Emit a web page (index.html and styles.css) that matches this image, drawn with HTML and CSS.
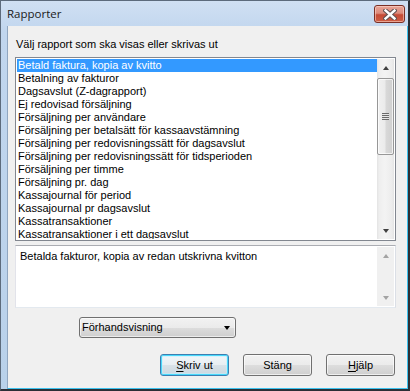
FILE: index.html
```html
<!DOCTYPE html>
<html lang="sv">
<head>
<meta charset="utf-8">
<title>Rapporter</title>
<link rel="stylesheet" href="styles.css">
</head>
<body>
<div class="window">
  <div class="titlebar">
    <span class="title">Rapporter</span>
    <button class="close" aria-label="Stäng">
      <svg width="14" height="11" viewBox="0 0 14 11"><path d="M2.5 1.5 L11.5 9.5 M11.5 1.5 L2.5 9.5" stroke="#5e5050" stroke-width="4.4" stroke-linecap="square"/><path d="M2.5 1.5 L11.5 9.5 M11.5 1.5 L2.5 9.5" stroke="#ffffff" stroke-width="2.4" stroke-linecap="square"/></svg>
    </button>
  </div>
  <div class="client">
    <div class="label">Välj rapport som ska visas eller skrivas ut</div>
    <div class="listbox">
      <ul class="items">
        <li class="selected">Betald faktura, kopia av kvitto</li>
        <li>Betalning av fakturor</li>
        <li>Dagsavslut (Z-dagrapport)</li>
        <li>Ej redovisad försäljning</li>
        <li>Försäljning per användare</li>
        <li>Försäljning per betalsätt för kassaavstämning</li>
        <li>Försäljning per redovisningssätt för dagsavslut</li>
        <li>Försäljning per redovisningssätt för tidsperioden</li>
        <li>Försäljning per timme</li>
        <li>Försäljning pr. dag</li>
        <li>Kassajournal för period</li>
        <li>Kassajournal pr dagsavslut</li>
        <li>Kassatransaktioner</li>
        <li>Kassatransaktioner i ett dagsavslut</li>
      </ul>
      <div class="vscroll">
        <div class="arrow up"><span class="tri-up"></span></div>
        <div class="track">
          <div class="thumb"><span class="grip"></span></div>
        </div>
        <div class="arrow down"><span class="tri-down"></span></div>
      </div>
    </div>
    <div class="textbox">
      <div class="desc">Betalda fakturor, kopia av redan utskrivna kvitton</div>
      <div class="vscroll disabled">
        <div class="arrow up"><span class="tri-up"></span></div>
        <div class="track"></div>
        <div class="arrow down"><span class="tri-down"></span></div>
      </div>
    </div>
    <div class="combo-row">
      <div class="combo">
        <span class="combo-text">Förhandsvisning</span>
        <span class="combo-arrow"></span>
      </div>
    </div>
    <div class="buttons">
      <button class="btn default"><u>S</u>kriv ut</button>
      <button class="btn">Stäng</button>
      <button class="btn"><u>H</u>jälp</button>
    </div>
  </div>
</div>
</body>
</html>
```

FILE: styles.css
```css
html, body {
  margin: 0;
  padding: 0;
  background: #ffffff;
}

body {
  font-family: "Liberation Sans", "DejaVu Sans", sans-serif;
  font-size: 11px;
  color: #000000;
}

.window {
  width: 410px;
  height: 391px;
  box-sizing: border-box;
  border-top: 1px solid #5d6b7c;
  border-left: 1px solid #5d6b7c;
  border-right: 2px solid #2b2f36;
  border-bottom: 2px solid #2b2f36;
  background: linear-gradient(to bottom, #d0e0f3 0px, #c1d6ee 30px, #b9d1ea 100%);
  padding: 0 0 0 6px;
  display: flex;
  flex-direction: column;
}

.titlebar {
  height: 25px;
  display: flex;
  align-items: flex-start;
  justify-content: space-between;
  flex: none;
}

.title {
  font-family: "Open Sans", "Noto Sans", sans-serif;
  font-size: 11.5px;
  color: #1a1a1a;
  margin-top: 5px;
}

.close {
  width: 31px;
  height: 18px;
  margin-top: 4px;
  margin-right: 3px;
  padding: 0;
  border: 1px solid #7a2f25;
  border-radius: 3px;
  background: linear-gradient(to bottom, #e8a597 0%, #dc8b7c 45%, #c54a35 55%, #cd5e45 100%);
  box-shadow: inset 0 0 0 1px rgba(255, 220, 210, 0.55);
  display: flex;
  align-items: center;
  justify-content: center;
}

.client {
  flex: 1;
  background: #f0f0f0;
  border-left: 1px solid #90a6c0;
  border-right: 1px solid #3cc2ee;
  border-bottom: 1px solid #3cc2ee;
  padding: 12px 11px 0 7px;
  display: flex;
  flex-direction: column;
}

.label {
  height: 13px;
  line-height: 13px;
  padding-left: 1px;
  margin-bottom: 6px;
}

.listbox {
  width: 381px;
  height: 184px;
  box-sizing: border-box;
  border: 1px solid #828790;
  background: #ffffff;
  padding: 1px;
  display: flex;
  overflow: hidden;
}

.items {
  list-style: none;
  margin: 0;
  padding: 0;
  flex: 1;
  overflow: hidden;
}

.items li {
  height: 13px;
  line-height: 13px;
  padding-left: 1px;
  white-space: nowrap;
}

.items li.selected {
  background: #3399ff;
  color: #ffffff;
}

.vscroll {
  width: 17px;
  flex: none;
  display: flex;
  flex-direction: column;
  background: linear-gradient(to right, #e3e3e3 0px, #eeeeee 2px, #f3f3f3 8px, #ececec 15px, #e3e3e3 17px);
}

.arrow {
  height: 17px;
  flex: none;
  display: flex;
  align-items: center;
  justify-content: center;
}

.tri-up {
  width: 0;
  height: 0;
  border-left: 3.5px solid transparent;
  border-right: 3.5px solid transparent;
  border-bottom: 4px solid #404040;
}

.tri-down {
  width: 0;
  height: 0;
  border-left: 3.5px solid transparent;
  border-right: 3.5px solid transparent;
  border-top: 4px solid #404040;
}

.track {
  flex: 1;
  padding-top: 2px;
}

.thumb {
  height: 77px;
  box-sizing: border-box;
  border: 1px solid #979797;
  border-radius: 2px;
  background: linear-gradient(to right, #f1f1f1 0%, #ebebeb 45%, #d8d8d8 55%, #cfcfcf 100%);
  box-shadow: inset 0 0 0 1px rgba(255, 255, 255, 0.7);
  display: flex;
  align-items: center;
  justify-content: center;
}

.grip {
  width: 7px;
  height: 7px;
  background: repeating-linear-gradient(to bottom, #6a6a6a 0px, #6a6a6a 1px, #e6e6e6 1px, #e6e6e6 2px);
}

.textbox {
  margin-top: 4px;
  width: 381px;
  height: 63px;
  box-sizing: border-box;
  border: 1px solid #dbdfe6;
  border-top-color: #abadb3;
  border-left-color: #e2e3ea;
  border-bottom-color: #e3e9ef;
  background: #ffffff;
  padding: 1px;
  display: flex;
}

.desc {
  flex: 1;
  padding: 3px 0 0 3px;
  line-height: 13px;
}

.vscroll.disabled {
  background: #f0f0f0;
}

.vscroll.disabled .tri-up {
  border-bottom-color: #a3a3a3;
}

.vscroll.disabled .tri-down {
  border-top-color: #a3a3a3;
}

.combo-row {
  margin-top: 9px;
  padding-left: 64px;
  display: flex;
}

.combo {
  width: 157px;
  height: 21px;
  box-sizing: border-box;
  border: 1px solid #707070;
  border-radius: 3px;
  background: linear-gradient(to bottom, #f2f2f2 0%, #ebebeb 50%, #dddddd 51%, #cfcfcf 100%);
  box-shadow: inset 0 0 0 1px rgba(255, 255, 255, 0.6);
  display: flex;
  align-items: center;
  justify-content: space-between;
  padding: 0 5px 0 2px;
}

.combo-text {
  line-height: 13px;
}

.combo-arrow {
  width: 0;
  height: 0;
  border-left: 3.5px solid transparent;
  border-right: 3.5px solid transparent;
  border-top: 4px solid #000000;
}

.buttons {
  margin-top: 16px;
  display: flex;
  justify-content: flex-end;
  gap: 14px;
  padding-right: 1px;
}

.btn {
  width: 69px;
  height: 22px;
  box-sizing: border-box;
  border: 1px solid #707070;
  border-radius: 3px;
  background: linear-gradient(to bottom, #f2f2f2 0%, #ebebeb 50%, #dddddd 51%, #cfcfcf 100%);
  box-shadow: inset 0 0 0 1px rgba(255, 255, 255, 0.65);
  font-family: "Liberation Sans", "DejaVu Sans", sans-serif;
  font-size: 11px;
  color: #000000;
  padding: 0;
}

.btn.default {
  border-color: #3c7fb1;
  background: linear-gradient(to bottom, #f0f6f9 0%, #e8eef2 50%, #d8e2e8 51%, #ccd8e0 100%);
  box-shadow: inset 0 0 0 1px #48d8fb, inset 0 0 0 2px rgba(190, 240, 255, 0.5);
}

.btn u {
  text-decoration: underline;
  text-underline-offset: 2px;
}
```
